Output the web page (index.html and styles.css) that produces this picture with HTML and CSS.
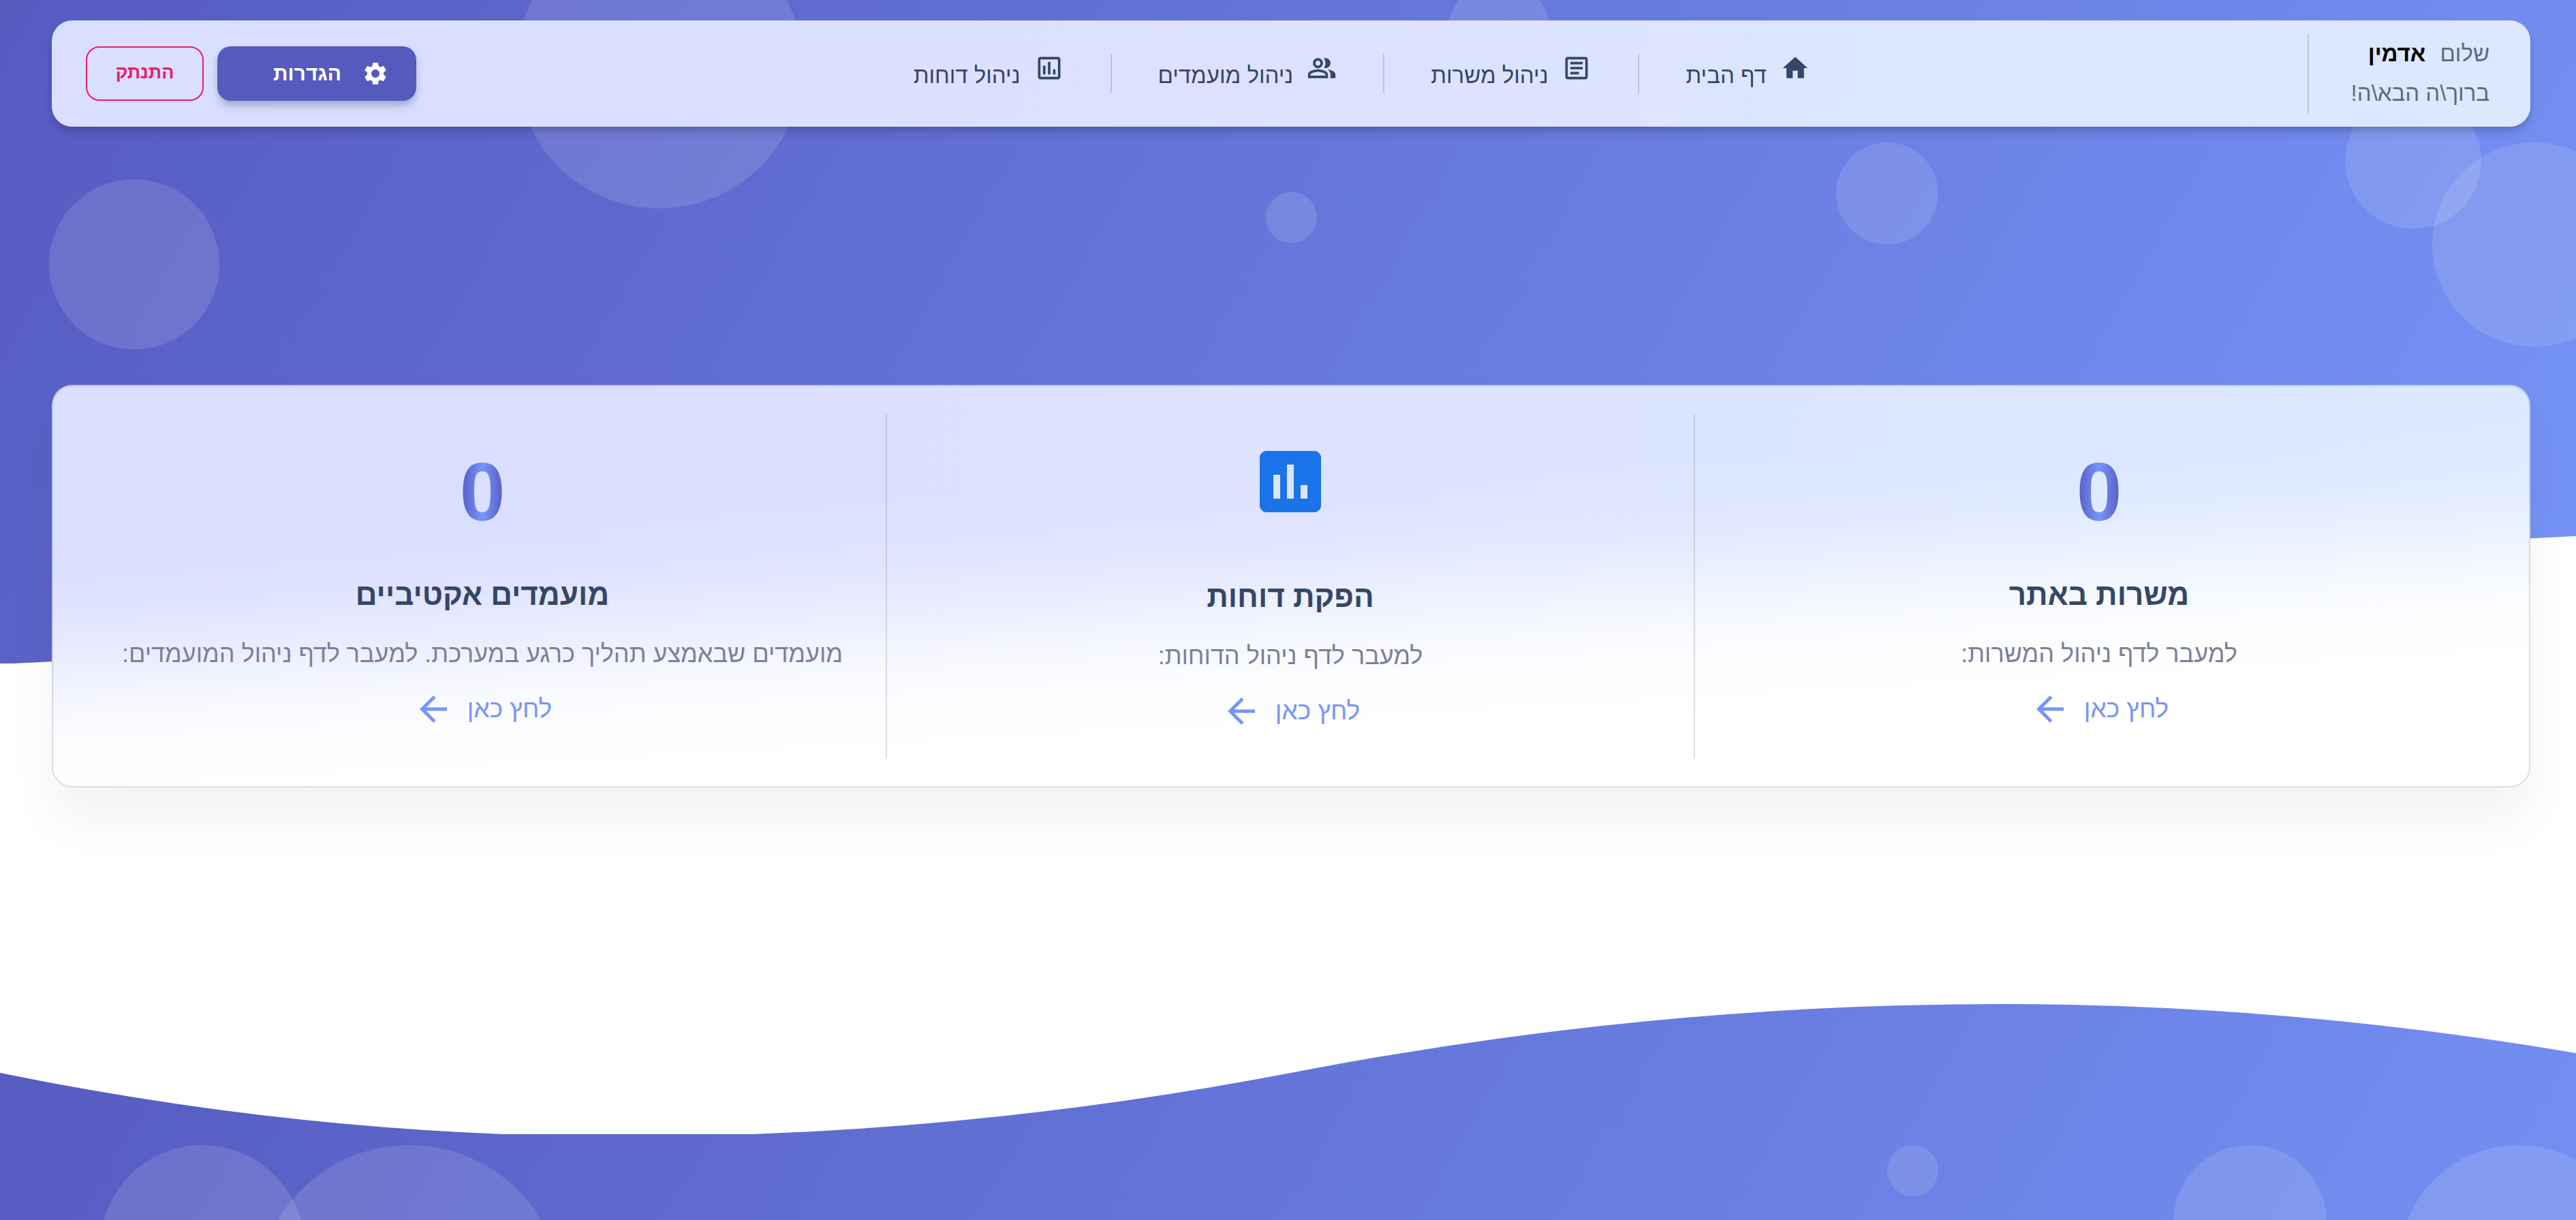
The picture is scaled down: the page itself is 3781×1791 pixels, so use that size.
FILE: index.html
```html
<!DOCTYPE html>
<html lang="he" dir="rtl">
<head>
<meta charset="utf-8">
<title>ניהול משרות</title>
<link rel="stylesheet" href="styles.css">
</head>
<body>
<div class="page">
  <div class="hero-bg" aria-hidden="true">
    <span class="bubble b1"></span>
    <span class="bubble b2"></span>
    <span class="bubble b3"></span>
    <span class="bubble b4"></span>
    <span class="bubble b5"></span>
    <span class="bubble b6"></span>
    <span class="bubble b7"></span>
  </div>

  <header class="panel navbar">
    <div class="greeting">
      <p>שלום <strong>אדמין</strong></p>
      <p>ברוך\ה הבא\ה!</p>
    </div>
    <nav class="menu">
      <a class="menu-item" href="#home">
        <svg class="icon" viewBox="0 0 24 24"><path d="M10 20v-6h4v6h5v-8h3L12 3 2 12h3v8z"/></svg>
        <span>דף הבית</span>
      </a>
      <a class="menu-item" href="#jobs">
        <svg class="icon" viewBox="0 0 24 24"><path d="M19 5v14H5V5h14m0-2H5c-1.1 0-2 .9-2 2v14c0 1.1.9 2 2 2h14c1.1 0 2-.9 2-2V5c0-1.1-.9-2-2-2zm-5 14H7v-2h7v2zm3-4H7v-2h10v2zm0-4H7V7h10v2z"/></svg>
        <span>ניהול משרות</span>
      </a>
      <a class="menu-item" href="#candidates">
        <svg class="icon" viewBox="0 0 24 24"><path d="M16.67 13.13C18.04 14.06 19 15.32 19 17v3h4v-3c0-2.18-3.57-3.47-6.33-3.87zM15 12c2.21 0 4-1.79 4-4s-1.79-4-4-4c-.47 0-.91.1-1.33.24C14.5 5.27 15 6.58 15 8s-.5 2.73-1.33 3.76c.42.14.86.24 1.33.24zM9 12c2.21 0 4-1.79 4-4s-1.79-4-4-4-4 1.79-4 4 1.79 4 4 4zm0-6c1.1 0 2 .9 2 2s-.9 2-2 2-2-.9-2-2 .9-2 2-2zM9 13c-2.67 0-8 1.34-8 4v3h16v-3c0-2.66-5.33-4-8-4zm6 5H3v-.99C3.2 16.29 6.3 15 9 15s5.8 1.29 6 2v1z"/></svg>
        <span>ניהול מועמדים</span>
      </a>
      <a class="menu-item" href="#reports">
        <svg class="icon" viewBox="0 0 24 24"><path d="M9 17H7v-7h2v7zm4 0h-2V7h2v10zm4 0h-2v-4h2v4zm2 2H5V5h14v14zm0-16H5c-1.1 0-2 .9-2 2v14c0 1.1.9 2 2 2h14c1.1 0 2-.9 2-2V5c0-1.1-.9-2-2-2z"/></svg>
        <span>ניהול דוחות</span>
      </a>
    </nav>
    <div class="actions">
      <button class="btn btn-primary" type="button">
        <svg class="icon-gear" viewBox="0 0 24 24"><path d="M19.14 12.94c.04-.3.06-.61.06-.94 0-.32-.02-.64-.07-.94l2.03-1.58c.18-.14.23-.41.12-.61l-1.92-3.32c-.12-.22-.37-.29-.59-.22l-2.39.96c-.5-.38-1.03-.7-1.62-.94l-.36-2.54c-.04-.24-.24-.41-.48-.41h-3.84c-.24 0-.43.17-.47.41l-.36 2.54c-.59.24-1.13.57-1.62.94l-2.39-.96c-.22-.08-.47 0-.59.22L2.74 8.87c-.12.21-.08.47.12.61l2.03 1.58c-.05.3-.09.63-.09.94s.02.64.07.94l-2.03 1.58c-.18.14-.23.41-.12.61l1.92 3.32c.12.22.37.29.59.22l2.39-.96c.5.38 1.03.7 1.62.94l.36 2.54c.05.24.24.41.48.41h3.84c.24 0 .44-.17.47-.41l.36-2.54c.59-.24 1.13-.56 1.62-.94l2.39.96c.22.08.47 0 .59-.22l1.92-3.32c.12-.22.07-.47-.12-.61l-2.01-1.58zM12 15.6c-1.98 0-3.6-1.62-3.6-3.6s1.62-3.6 3.6-3.6 3.6 1.62 3.6 3.6-1.62 3.6-3.6 3.6z"/></svg>
        <span>הגדרות</span>
      </button>
      <button class="btn btn-outline" type="button">התנתק</button>
    </div>
  </header>

  <main class="panel stats">
    <section class="stat">
      <div class="figure"><span class="count">0</span></div>
      <h2>משרות באתר</h2>
      <p>למעבר לדף ניהול המשרות:</p>
      <a class="go" href="#jobs"><span>לחץ כאן</span><svg class="arrow" viewBox="0 0 24 24"><path d="M20 11H7.83l5.59-5.59L12 4l-8 8 8 8 1.41-1.41L7.83 13H20v-2z"/></svg></a>
    </section>
    <section class="stat">
      <div class="figure figure-icon"><svg class="chart" viewBox="0 0 24 24"><path d="M19 3H5c-1.1 0-2 .9-2 2v14c0 1.1.9 2 2 2h14c1.1 0 2-.9 2-2V5c0-1.1-.9-2-2-2zM9 17H7v-7h2v7zm4 0h-2V7h2v10zm4 0h-2v-4h2v4z"/></svg></div>
      <h2>הפקת דוחות</h2>
      <p>למעבר לדף ניהול הדוחות:</p>
      <a class="go" href="#reports"><span>לחץ כאן</span><svg class="arrow" viewBox="0 0 24 24"><path d="M20 11H7.83l5.59-5.59L12 4l-8 8 8 8 1.41-1.41L7.83 13H20v-2z"/></svg></a>
    </section>
    <section class="stat">
      <div class="figure"><span class="count">0</span></div>
      <h2>מועמדים אקטיביים</h2>
      <p>מועמדים שבאמצע תהליך כרגע במערכת. למעבר לדף ניהול המועמדים:</p>
      <a class="go" href="#candidates"><span>לחץ כאן</span><svg class="arrow" viewBox="0 0 24 24"><path d="M20 11H7.83l5.59-5.59L12 4l-8 8 8 8 1.41-1.41L7.83 13H20v-2z"/></svg></a>
    </section>
  </main>

  <footer class="footer">
    <svg class="wave" viewBox="0 0 3781 200" preserveAspectRatio="none" aria-hidden="true"><path d="M0 0V110Q458 203.500 916 203.500Q1408 203.500 1900 109Q2419 9 2938 9Q3360 9 3781 81V0Z"/></svg>
    <span class="bubble f1"></span>
    <span class="bubble f2"></span>
    <span class="bubble f3"></span>
    <span class="bubble f4"></span>
    <span class="bubble f5"></span>
  </footer>
</div>
</body>
</html>
```
FILE: styles.css
```css
* { box-sizing: border-box; }

body {
  margin: 0;
  background: #fff;
  font-family: "Liberation Sans", Arial, sans-serif;
  color: #344767;
}

h2, p { margin: 0; }
a { color: inherit; text-decoration: none; }

.page {
  position: relative;
  display: flex;
  flex-direction: column;
  min-height: 100vh;
  overflow: hidden;
}

.hero-bg {
  position: absolute;
  inset: 0 0 auto;
  height: 974px;
  background: linear-gradient(120deg, #565bc0, #7694f7);
  clip-path: polygon(0 0, 100% 0, 100% 787px, 0 975px);
}

.bubble {
  position: absolute;
  border-radius: 50%;
  background: rgba(255, 255, 255, .12);
}

.b1 { left: 72px; top: 263px; width: 250px; height: 250px; }
.b2 { left: 758px; top: -114px; width: 420px; height: 420px; }
.b3 { left: 2125px; top: -29px; width: 150px; height: 150px; }
.b4 { left: 1858px; top: 282px; width: 75px; height: 75px; }
.b5 { left: 2695px; top: 209px; width: 150px; height: 150px; }
.b6 { left: 3442px; top: 136px; width: 200px; height: 200px; }
.b7 { left: 3570px; top: 209px; width: 300px; height: 300px; }

.panel {
  position: relative;
  margin: 0 67px 0 76px;
  border-radius: 30px;
}

/* top bar */
.navbar {
  display: flex;
  justify-content: space-between;
  align-items: center;
  margin-top: 30px;
  padding: 20px 60px 20px 50px;
  background: linear-gradient(100deg, #dadeff, #dde1ff 45%, #dce6ff 75%, #dde8ff);
  box-shadow: 0 10px 15px -2px rgba(0, 0, 0, .12), 0 5px 10px -2px rgba(0, 0, 0, .12);
}

.greeting {
  padding-left: 62px;
  border-left: 2px solid rgba(52, 71, 103, .2);
  font-size: 33px;
  line-height: 58px;
  color: #596b8a;
}
.greeting strong { margin-right: 12px; color: #000; }

.menu { display: flex; align-items: center; }
.menu-item {
  display: flex;
  align-items: center;
  gap: 20px;
  height: 58px;
  padding: 6px 68px 0;
  font-size: 33px;
}
.menu-item + .menu-item { border-right: 2px solid rgba(52, 71, 103, .2); }
.icon { width: 44px; height: 44px; margin-bottom: 22px; fill: #344767; }

.actions { display: flex; gap: 20px; }
.btn {
  height: 80px;
  border: 0;
  border-radius: 20px;
  font: 700 30px/40px "Liberation Sans", Arial, sans-serif;
}
.btn-primary {
  display: flex;
  align-items: center;
  gap: 30px;
  width: 292px;
  padding: 0 40px;
  background: #555abf;
  color: #fff;
  box-shadow: 0 10px 15px -2px rgba(52, 71, 103, .25), 0 5px 10px -2px rgba(52, 71, 103, .2);
}
.icon-gear { width: 40px; height: 40px; fill: #fff; }
.btn-outline {
  width: 173px;
  padding: 0 0 4px;
  border: 2px solid #e91e63;
  background: transparent;
  color: #e91e63;
  font-size: 27px;
}

/* summary card: a tint that fades to white along the slanted edge of the hero */
.stats {
  display: grid;
  grid-template-columns: repeat(3, 1fr);
  margin-top: 379px;
  padding: 42px 40px;
  background:
    linear-gradient(177deg, rgba(255, 255, 255, 0) 28%, rgba(255, 255, 255, .04) 35%, rgba(255, 255, 255, .16) 43%, rgba(255, 255, 255, .5) 53%, rgba(255, 255, 255, .84) 63%, rgba(255, 255, 255, .96) 70%, #fff 80%),
    linear-gradient(100deg, #dadeff, #dde1ff 40%, #dbe6ff 75%, #dce9ff);
  box-shadow: 0 50px 75px rgba(0, 0, 0, .05);
}
.stats::after {
  content: "";
  position: absolute;
  inset: 0;
  border: 2px solid rgba(0, 0, 0, .125);
  border-radius: 30px;
  pointer-events: none;
}
.stat {
  display: flex;
  flex-direction: column;
  align-items: center;
  padding: 40px;
  white-space: nowrap;
}
.stat + .stat { border-right: 2px solid rgba(0, 0, 0, .125); }
.figure { display: flex; align-items: center; height: 150px; }
.figure-icon { align-items: flex-start; height: 153px; }
.count {
  background: linear-gradient(90deg, #555abf, #7795f8 50%, #555abf);
  background-clip: text;
  color: transparent;
  font-size: 120px;
  font-weight: 700;
  line-height: 150px;
}
.chart { width: 120px; height: 120px; fill: #1a73e8; }
.stat h2 { margin-top: 41px; font-size: 44px; line-height: 70px; }
.stat p { margin-top: 21px; font-size: 36px; line-height: 62px; color: #7b809a; }
.go {
  display: flex;
  align-items: center;
  gap: 20px;
  margin-top: 20px;
  font-size: 37px;
  line-height: 60px;
  color: #7795f8;
}
.arrow { width: 60px; height: 60px; fill: #7795f8; }

/* footer */
.footer {
  position: relative;
  margin-top: auto;
  height: 326px;
  overflow: hidden;
  background: linear-gradient(120deg, #565bc0, #7694f7) top / 100% 970px;
}
.wave { display: block; width: 100%; height: 200px; fill: #fff; }
.f1 { left: 147px; top: 216px; width: 300px; height: 300px; }
.f2 { left: 376px; top: 216px; width: 450px; height: 450px; }
.f3 { left: 2770px; top: 216px; width: 75px; height: 75px; }
.f4 { left: 3190px; top: 216px; width: 225px; height: 225px; }
.f5 { left: 3521px; top: 216px; width: 350px; height: 350px; }
```
